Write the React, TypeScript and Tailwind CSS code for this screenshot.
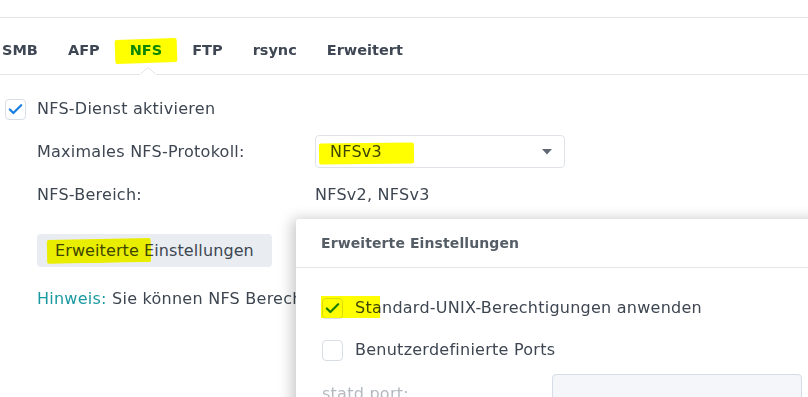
import { Check } from 'lucide-react';

const tabs = ['SMB', 'AFP', 'NFS', 'FTP', 'rsync', 'Erweitert'];

function Marker({ className }: { className: string }) {
  return (
    <span
      className={`pointer-events-none absolute bg-[#ffff00] mix-blend-multiply ${className}`}
    />
  );
}

function Box({ checked, className = '' }: { checked?: boolean; className?: string }) {
  return (
    <span
      className={`flex h-[21px] w-[21px] shrink-0 items-center justify-center rounded-[4px] border border-[#d9dee5] bg-white ${className}`}
    >
      {checked && <Check className="h-[17px] w-[17px] text-[#1a7fe0]" strokeWidth={3.2} />}
    </span>
  );
}

export default function App() {
  return (
    <div className="relative isolate h-[397px] w-[808px] overflow-hidden bg-white font-['DejaVu_Sans',sans-serif] text-[#3d4651]">
      {/* top strip */}
      <div className="h-[18px] border-b border-[#e3e5e8]" />

      {/* tabs */}
      <div className="relative flex h-[57px] items-center border-b border-[#e3e5e8] pl-[2px] pt-[10px] text-[14.5px] font-bold">
        {tabs.map((t, i) => (
          <span
            key={t}
            className={`relative ${i === 0 ? '' : 'ml-[30px]'} ${t === 'NFS' ? 'text-[#0c86e8]' : 'text-[#3e4753]'}`}
          >
            {t}
          </span>
        ))}
        <Marker className="left-[115px] top-[21px] h-[24px] w-[62px] -rotate-2 rounded-[2px]" />
        <svg className="absolute bottom-[-1px] left-[140px]" width="16" height="8" viewBox="0 0 16 8">
          <path d="M0 7.5 L8 0.5 L16 7.5" fill="white" stroke="#e3e5e8" strokeWidth="1" />
          <rect x="0" y="7" width="16" height="1" fill="white" />
        </svg>
      </div>

      {/* content */}
      <div className="relative pt-[22px] text-[16px] tracking-[0.25px]">
        <label className="flex items-center gap-[11px] pl-[5px]">
          <Box checked />
          <span>NFS-Dienst aktivieren</span>
        </label>

        <div className="mt-[14px] grid grid-cols-[278px_250px] items-center pl-[37px]">
          <span>Maximales NFS-Protokoll:</span>
          <div className="relative flex h-[33px] items-center justify-between rounded-[4px] border border-[#dfe3e8] pl-[14px] pr-[12px]">
            <span>NFSv3</span>
            <svg width="10" height="6" viewBox="0 0 10 6">
              <path d="M0 0 H10 L5 5.5 Z" fill="#5f6873" />
            </svg>
            <Marker className="left-[3px] top-[7px] h-[21px] w-[95px] rotate-[-0.6deg] rounded-[2px]" />
          </div>
        </div>

        <div className="mt-[15px] grid grid-cols-[278px_250px] items-center pl-[37px]">
          <span>NFS-Bereich:</span>
          <span>NFSv2, NFSv3</span>
        </div>

        <div className="mt-[27px] pl-[37px]">
          <button className="relative h-[33px] rounded-[4px] bg-[#e9edf2] px-[18px] text-[16px] tracking-[0.1px] text-[#3d4651]">
            Erweiterte Einstellungen
            <Marker className="left-[10px] top-[5px] h-[24px] w-[104px] -rotate-1 rounded-[2px]" />
          </button>
        </div>

        <p className="mt-[20px] w-[296px] overflow-hidden whitespace-nowrap pl-[37px]">
          <span className="text-[#1a9aa0]">Hinweis:</span> Sie können NFS Berech
        </p>
      </div>

      {/* dialog */}
      <div className="absolute left-[296px] top-[219px] h-[260px] w-[560px] rounded-tl-[3px] bg-white shadow-[-4px_0_14px_rgba(0,0,0,0.22)]">
        <div className="flex h-[49px] items-center border-b border-[#e3e5e8] pl-[25px] text-[14px] font-bold tracking-[0.1px] text-[#555d66]">
          Erweiterte Einstellungen
        </div>
        <div className="pl-[26px] pt-[28px] text-[16px] tracking-[0.25px]">
          <label className="relative flex items-center gap-[12px]">
            <Box checked />
            <span>Standard-UNIX-Berechtigungen anwenden</span>
            <Marker className="left-[-1px] top-[0px] h-[22px] w-[59px]" />
          </label>
          <label className="mt-[18px] flex items-center gap-[12px]">
            <Box />
            <span>Benutzerdefinierte Ports</span>
          </label>
          <div className="mt-[12px] grid grid-cols-[230px_250px] items-start">
            <span className="pt-[8px] text-[#b4b9bf]">statd port:</span>
            <div className="h-[34px] rounded-[4px] border border-[#d6dde6] bg-[#f4f6f9]" />
          </div>
        </div>
      </div>
    </div>
  );
}
